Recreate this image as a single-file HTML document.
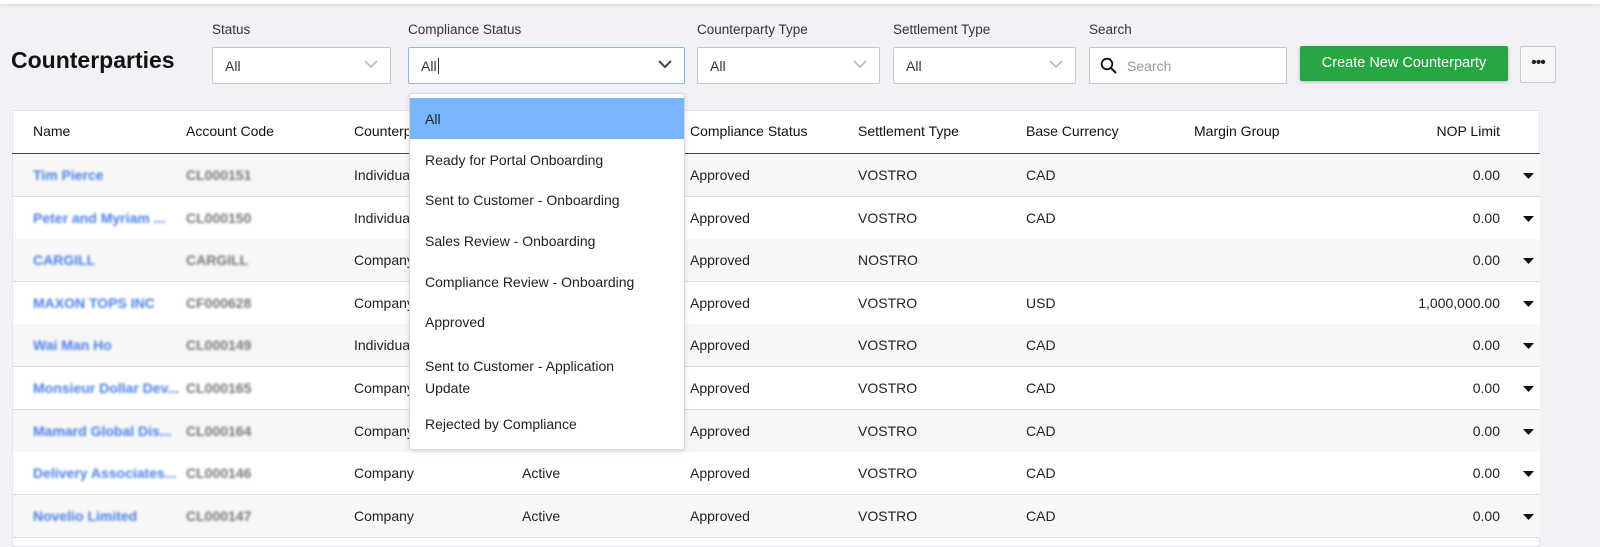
<!DOCTYPE html>
<html><head><style>
*{box-sizing:border-box;margin:0;padding:0}
body{width:1600px;height:547px;overflow:hidden;background:#f0f2f5;font-family:"Liberation Sans",sans-serif;color:#222;font-size:13.5px;position:relative}
.a{position:absolute}
.top{left:0;top:0;width:1600px;height:4px;background:#fff;box-shadow:0 1px 4px rgba(0,0,0,.15)}
.lbl{top:22px;font-size:13.5px;color:#333}
.inp{top:47px;height:37px;background:#fff;border:1px solid #c8c8c8;border-radius:2px;padding:10px 12px;font-size:14px;color:#333}
.chev{position:absolute;right:12px;top:12px}
.card{left:12px;top:110px;width:1528px;height:437px;background:#fff;border:1px solid #e2e4e8}
.th{top:123px;font-size:14px;color:#111}
.row{left:13px;width:1527px;height:43px;border-bottom:1px solid #ddd}
.c{position:absolute;top:13px;font-size:14px;color:#222}
.bl{filter:blur(1.4px);color:#4a7fe8;font-weight:bold}
.bg{filter:blur(1.4px);color:#777;font-weight:bold}
.dd{left:409px;top:93px;width:276px;height:357px;background:#fff;border:1px solid #d6d6d6;border-radius:3px;box-shadow:0 2px 6px rgba(0,0,0,.12)}
.it{position:absolute;left:15px;font-size:14px;color:#222}
</style></head><body>
<div class="a top"></div>
<div class="a" style="left:11px;top:47px;font-size:23px;font-weight:bold;color:#111">Counterparties</div>

<div class="a lbl" style="left:212px">Status</div>
<div class="a inp" style="left:212px;width:179px">All<svg class="chev" width="14" height="9" viewBox="0 0 14 9"><path d="M1 1l6 6 6-6" fill="none" stroke="#bbb" stroke-width="1.6"/></svg></div>
<div class="a lbl" style="left:408px">Compliance Status</div>
<div class="a inp" style="left:408px;width:277px;border-color:#8bb8f0">All<span style="border-left:1px solid #333;margin-left:1px"></span><svg class="chev" width="14" height="9" viewBox="0 0 14 9"><path d="M1 1l6 6 6-6" fill="none" stroke="#444" stroke-width="2"/></svg></div>
<div class="a lbl" style="left:697px">Counterparty Type</div>
<div class="a inp" style="left:697px;width:183px">All<svg class="chev" width="14" height="9" viewBox="0 0 14 9"><path d="M1 1l6 6 6-6" fill="none" stroke="#bbb" stroke-width="1.6"/></svg></div>
<div class="a lbl" style="left:893px">Settlement Type</div>
<div class="a inp" style="left:893px;width:183px">All<svg class="chev" width="14" height="9" viewBox="0 0 14 9"><path d="M1 1l6 6 6-6" fill="none" stroke="#bbb" stroke-width="1.6"/></svg></div>
<div class="a lbl" style="left:1089px">Search</div>
<div class="a inp" style="left:1089px;width:198px;padding-left:37px;color:#999"><svg style="position:absolute;left:10px;top:9px" width="18" height="18" viewBox="0 0 18 18"><circle cx="7" cy="7" r="5.3" fill="none" stroke="#111" stroke-width="1.8"/><path d="M11 11l5 5" stroke="#111" stroke-width="2"/></svg>Search</div>
<div class="a" style="left:1300px;top:46px;width:208px;height:35px;background:#27a744;border-radius:2px;color:#fff;font-size:14.5px;text-align:center;line-height:35px;box-shadow:0 1px 3px rgba(0,0,0,.25)">Create New Counterparty</div>
<div class="a" style="left:1520px;top:46px;width:36px;height:37px;background:#f6f7f9;border:1px solid #c8c8c8;border-radius:2px;text-align:center;font-size:16px;line-height:32px;letter-spacing:-1px">•••</div>

<div class="a card"></div>
<div class="a" style="left:12px;top:153px;width:1528px;height:1px;background:#444"></div>
<div class="a th" style="left:33px">Name</div>
<div class="a th" style="left:186px">Account Code</div>
<div class="a th" style="left:354px">Counterparty Type</div>
<div class="a th" style="left:690px">Compliance Status</div>
<div class="a th" style="left:858px">Settlement Type</div>
<div class="a th" style="left:1026px">Base Currency</div>
<div class="a th" style="left:1194px">Margin Group</div>
<div class="a th" style="left:1430px;width:70px;text-align:right">NOP Limit</div>

<div id="rows"></div>
<script>
var d=[["Tim Pierce","CL000151","Individual","Active","VOSTRO","CAD","0.00"],
["Peter and Myriam ...","CL000150","Individual","Active","VOSTRO","CAD","0.00"],
["CARGILL","CARGILL","Company","Active","NOSTRO","","0.00"],
["MAXON TOPS INC","CF000628","Company","Active","VOSTRO","USD","1,000,000.00"],
["Wai Man Ho","CL000149","Individual","Active","VOSTRO","CAD","0.00"],
["Monsieur Dollar Dev...","CL000165","Company","Active","VOSTRO","CAD","0.00"],
["Mamard Global Dis...","CL000164","Company","Active","VOSTRO","CAD","0.00"],
["Delivery Associates...","CL000146","Company","Active","VOSTRO","CAD","0.00"],
["Novelio Limited","CL000147","Company","Active","VOSTRO","CAD","0.00"]];
var h="";
d.forEach(function(r,i){var t=154+i*42.6;
h+='<div class="a row" style="top:'+t+'px;background:'+(i%2?'#fff':'#f7f7f7')+'">'+
'<span class="c bl" style="left:20px">'+r[0]+'</span>'+
'<span class="c bg" style="left:173px">'+r[1]+'</span>'+
'<span class="c" style="left:341px">'+r[2]+'</span>'+
'<span class="c" style="left:509px">'+r[3]+'</span>'+
'<span class="c" style="left:677px">Approved</span>'+
'<span class="c" style="left:845px">'+r[4]+'</span>'+
'<span class="c" style="left:1013px">'+r[5]+'</span>'+
'<span class="c" style="left:1287px;width:200px;text-align:right">'+r[6]+'</span>'+
'<svg style="position:absolute;left:1510px;top:19px" width="11" height="7" viewBox="0 0 11 7"><path d="M0 0h11L5.5 6z" fill="#111"/></svg>'+
'</div>';});
document.getElementById("rows").innerHTML=h;
</script>

<div class="a dd">
<div class="a" style="left:0;top:4px;width:274px;height:41px;background:#78b5fc"></div>
<div class="it" style="top:17px">All</div>
<div class="it" style="top:58px">Ready for Portal Onboarding</div>
<div class="it" style="top:98px">Sent to Customer - Onboarding</div>
<div class="it" style="top:139px">Sales Review - Onboarding</div>
<div class="it" style="top:180px">Compliance Review - Onboarding</div>
<div class="it" style="top:220px">Approved</div>
<div class="it" style="top:261px;line-height:22px">Sent to Customer - Application<br>Update</div>
<div class="it" style="top:322px">Rejected by Compliance</div>
</div>
</body></html>
